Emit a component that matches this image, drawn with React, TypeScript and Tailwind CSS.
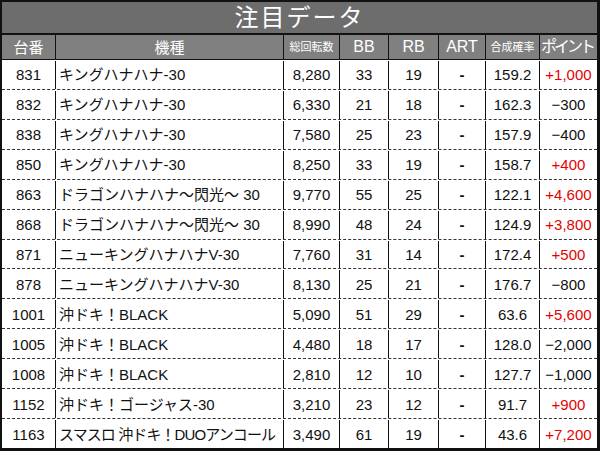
import React from "react";

type Row = [string, string, string, string, string, string, string, string];

const rows: Row[] = [
  ["831", "キングハナハナ-30", "8,280", "33", "19", "-", "159.2", "+1,000"],
  ["832", "キングハナハナ-30", "6,330", "21", "18", "-", "162.3", "-300"],
  ["838", "キングハナハナ-30", "7,580", "25", "23", "-", "157.9", "-400"],
  ["850", "キングハナハナ-30", "8,250", "33", "19", "-", "158.7", "+400"],
  ["863", "ドラゴンハナハナ～閃光～ 30", "9,770", "55", "25", "-", "122.1", "+4,600"],
  ["868", "ドラゴンハナハナ～閃光～ 30", "8,990", "48", "24", "-", "124.9", "+3,800"],
  ["871", "ニューキングハナハナV-30", "7,760", "31", "14", "-", "172.4", "+500"],
  ["878", "ニューキングハナハナV-30", "8,130", "25", "21", "-", "176.7", "-800"],
  ["1001", "沖ドキ！BLACK", "5,090", "51", "29", "-", "63.6", "+5,600"],
  ["1005", "沖ドキ！BLACK", "4,480", "18", "17", "-", "128.0", "-2,000"],
  ["1008", "沖ドキ！BLACK", "2,810", "12", "10", "-", "127.7", "-1,000"],
  ["1152", "沖ドキ！ゴージャス-30", "3,210", "23", "12", "-", "91.7", "+900"],
  ["1163", "スマスロ 沖ドキ！DUOアンコール", "3,490", "61", "19", "-", "43.6", "+7,200"],
];

const cols = "grid grid-cols-[54px_228px_56px_49px_50px_47px_54px_1fr]";

export default function App() {
  return (
    <div
      className="w-[600px] h-[451px] bg-white flex flex-col border-t-2 border-l-2 border-r-[3px] border-b-[3px] border-[#111] text-[#111]"
      style={{ fontFamily: '"Liberation Sans", "Noto Sans CJK JP", sans-serif' }}
    >
      <div className="h-[33px] shrink-0 bg-[#6d6d6d] border-b-2 border-[#111] flex items-center justify-center">
        <span className="text-white text-[24px] leading-none tracking-[2px]">注目データ</span>
      </div>
      <div className={`${cols} h-[25px] shrink-0 bg-[#808080] border-b border-[#111] text-white whitespace-nowrap leading-none`}>
        <div className="border-r border-[#111] flex items-center justify-center text-[15px]">台番</div>
        <div className="border-r border-[#111] flex items-center justify-center text-[15px]">機種</div>
        <div className="border-r border-[#111] flex items-center justify-center text-[11px]">総回転数</div>
        <div className="border-r border-[#111] flex items-center justify-center text-[16px]">BB</div>
        <div className="border-r border-[#111] flex items-center justify-center text-[16px]">RB</div>
        <div className="border-r border-[#111] flex items-center justify-center text-[16px]">ART</div>
        <div className="border-r border-[#111] flex items-center justify-center text-[11px]">合成確率</div>
        <div className="flex items-center justify-center text-[16px] tracking-[-3px] pr-[3px]">ポイント</div>
      </div>
      <div className="flex-1 flex flex-col">
        {rows.map((r, i) => {
          const plus = r[7].startsWith("+");
          const last = i === rows.length - 1;
          const long = r[1].length > 16;
          return (
            <div
              key={i}
              className={`${cols} flex-1 text-[15px] leading-none pt-[1px] ${last ? "" : "border-b border-dashed border-[#333]"}`}
            >
              <div className="border-r border-[#111] flex items-center justify-center">{r[0]}</div>
              <div className={`border-r border-[#111] flex items-center pl-[3px] whitespace-nowrap overflow-hidden ${long ? "tracking-[-0.9px]" : ""}`}>{r[1]}</div>
              <div className="border-r border-[#111] flex items-center justify-center">{r[2]}</div>
              <div className="border-r border-[#111] flex items-center justify-center">{r[3]}</div>
              <div className="border-r border-[#111] flex items-center justify-center">{r[4]}</div>
              <div className="border-r border-[#111] flex items-center justify-center font-bold">{r[5]}</div>
              <div className="border-r border-[#111] flex items-center justify-center">{r[6]}</div>
              <div className={`flex items-center justify-center ${plus ? "text-[#e60000]" : ""}`}>
                {r[7].replace(/^-/, "−")}
              </div>
            </div>
          );
        })}
      </div>
    </div>
  );
}
